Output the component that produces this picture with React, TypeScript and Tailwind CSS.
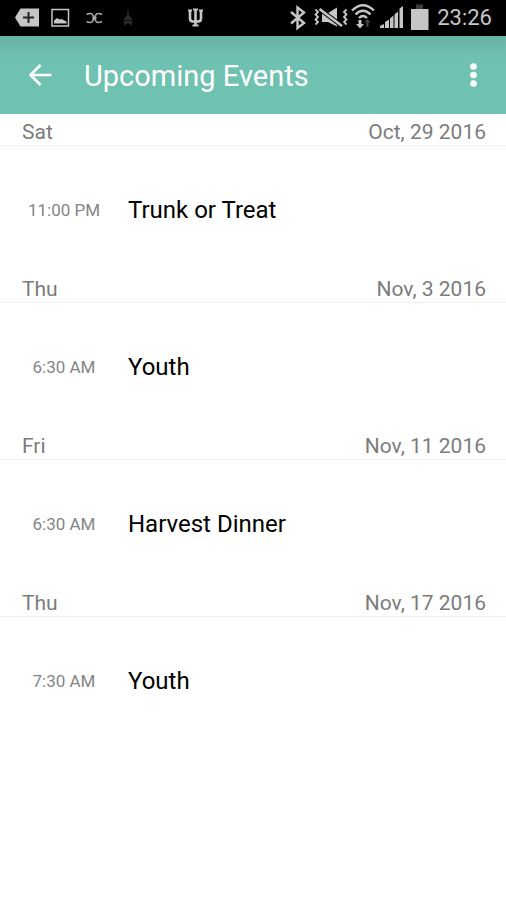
import type { ReactNode } from 'react';

interface EventItem {
  day: string;
  date: string;
  time: string;
  title: string;
}

const events: EventItem[] = [
  { day: 'Sat', date: 'Oct, 29 2016', time: '11:00 PM', title: 'Trunk or Treat' },
  { day: 'Thu', date: 'Nov, 3 2016', time: '6:30 AM', title: 'Youth' },
  { day: 'Fri', date: 'Nov, 11 2016', time: '6:30 AM', title: 'Harvest Dinner' },
  { day: 'Thu', date: 'Nov, 17 2016', time: '7:30 AM', title: 'Youth' },
];

function StatusIcon({ width, children }: { width: number; children: ReactNode }) {
  return (
    <svg width={width} height="36" viewBox={`0 0 ${width} 36`} fill="none" className="shrink-0" aria-hidden="true">
      {children}
    </svg>
  );
}

function StatusBar() {
  return (
    <div className="flex h-9 items-center justify-between bg-black px-3.5 text-[#c6c6c6]">
      <div className="flex items-center">
        {/* backspace tag with a plus */}
        <StatusIcon width={26}>
          <path d="M1 17.5 6.5 8.5H25v18H6.5z" fill="currentColor" />
          <path d="M14.5 12v11M9 17.5h11" stroke="#222" strokeWidth="2" />
        </StatusIcon>
        {/* gallery */}
        <StatusIcon width={42}>
          <path d="M12 9.5h16.5V26H12z" stroke="currentColor" strokeWidth="1.5" />
          <path d="M14 23.5v-3l3-2.5 2.5 1.5 2-.5 5 2.5v2z" fill="currentColor" />
        </StatusIcon>
        {/* crossed arcs */}
        <StatusIcon width={40}>
          <path
            d="M4.5 14.5q5-2.500 6.500 1 1.500 2.500 0 5-1.500 3.500-6.500 1M20 14.500q-5-2.500-6.500 1-1.500 2.500 0 5 1.500 3.500 6.500 1"
            stroke="#a8a8a8"
            strokeWidth="1.6"
          />
          <path d="M10.500 18h4" stroke="#a8a8a8" strokeWidth="2.4" />
        </StatusIcon>
        <StatusIcon width={64}>
          <path d="M6 10v6" stroke="#242424" strokeWidth="1.5" />
          <path d="m6 14 4 5v6H8.500L6 23l-2.500 2H2v-6z" fill="#2b2b2b" />
          <path d="m3 21.500 3-2 3 2" stroke="#0c0c0c" />
        </StatusIcon>
        {/* trident */}
        <StatusIcon width={20}>
          <path d="M9.5 9v17M4 11v7.5q0 3 3 3h5q3 0 3-3V11" stroke="currentColor" strokeWidth="2.6" />
          <path d="M2 10.500h4M13 10.500h4M7 9.500h5M6.500 25.500h6" stroke="currentColor" strokeWidth="2" />
        </StatusIcon>
      </div>

      <div className="flex items-center">
        {/* bluetooth */}
        <StatusIcon width={25}>
          <path d="m2 12 13 11-6.500 5V7.500l6.500 5L2 23.500" stroke="currentColor" strokeWidth="2.4" />
        </StatusIcon>
        {/* vibrate and mute */}
        <StatusIcon width={37}>
          <path
            d="M1.5 9.5 4 12l-2.500 2.500L4 17l-2.500 2.500L4 22l-2.500 2.500M32.500 9.500 30 12l2.500 2.500L30 17l2.500 2.500L30 22l2.500 2.500"
            stroke="currentColor"
            strokeWidth="1.8"
          />
          <path d="M8 13h6l9-5.500v19L14 22H8z" fill="currentColor" />
          <path d="m5.500 9 22.500 17" stroke="#000" strokeWidth="4.6" />
          <path d="m5.500 9 22.500 17" stroke="currentColor" strokeWidth="2.6" />
        </StatusIcon>
        {/* wifi */}
        <StatusIcon width={29}>
          <path d="M1 10.5q11-10.500 22 0M4.500 14.500q7.500-7.500 15 0M8 18q4-4 8 0" stroke="currentColor" strokeWidth="2.4" />
          <path d="M10.500 20v4H13l-4 4.500L5 24h2.500v-4z" fill="currentColor" />
          <path d="M15.500 27v-4.500h-2l3-3.500 3 3.500h-2V27z" fill="#444" />
        </StatusIcon>
        {/* signal */}
        <StatusIcon width={31}>
          <path d="M0 28v-2l4-2v4zM5 28v-6l4-2.500V28zM10 28v-9.500l3.500-3V28zM14.500 28V14.500l3.500-3V28zM19.500 28V8.500L23 6v22z" fill="currentColor" />
        </StatusIcon>
        {/* battery */}
        <StatusIcon width={26}>
          <path d="M5 4.5h7V9H5z" fill="#3c3c3c" />
          <path d="M0 9h17.5v21H0z" fill="currentColor" />
        </StatusIcon>
        <span className="text-[22px] leading-9">23:26</span>
      </div>
    </div>
  );
}

function AppBar() {
  return (
    <header className="flex h-[78px] items-center bg-linear-to-b from-[#68b3a5] to-[#6fc1b1] to-30% px-6 text-white">
      <button type="button" aria-label="Back" className="flex h-8 w-8 items-center justify-center">
        <svg width="26" height="26" viewBox="0 0 26 26" fill="none" stroke="currentColor" strokeWidth="2.6" aria-hidden="true">
          <path d="M24.5 13H4M13.5 3l-10 10 10 10" />
        </svg>
      </button>
      <h1 className="ml-7 flex-1 pt-0.5 text-[29px] leading-9">Upcoming Events</h1>
      <button type="button" aria-label="More options" className="flex h-8 w-4 items-center justify-center">
        <svg width="8" height="26" viewBox="0 0 8 26" fill="currentColor" aria-hidden="true">
          <circle cx="3.5" cy="4.5" r="3.3" />
          <circle cx="3.5" cy="13" r="3.3" />
          <circle cx="3.5" cy="21.5" r="3.3" />
        </svg>
      </button>
    </header>
  );
}

export default function App() {
  return (
    <div className="min-h-screen bg-white font-['Roboto',sans-serif]">
      <StatusBar />
      <AppBar />
      <main>
        {events.map((event) => (
          <section key={event.date}>
            <h2 className="flex h-8 items-center justify-between border-b border-[#efefef] pt-1 pr-5 pl-[22px] text-[21px] leading-7 text-[#7c7c7c]">
              <span>{event.day}</span>
              <span>{event.date}</span>
            </h2>
            <div className="flex h-[125px] items-center pt-0.5">
              <time className="w-32 shrink-0 text-center text-[17px] leading-6 text-[#858585]">{event.time}</time>
              <p className="text-2xl text-black">{event.title}</p>
            </div>
          </section>
        ))}
      </main>
    </div>
  );
}
